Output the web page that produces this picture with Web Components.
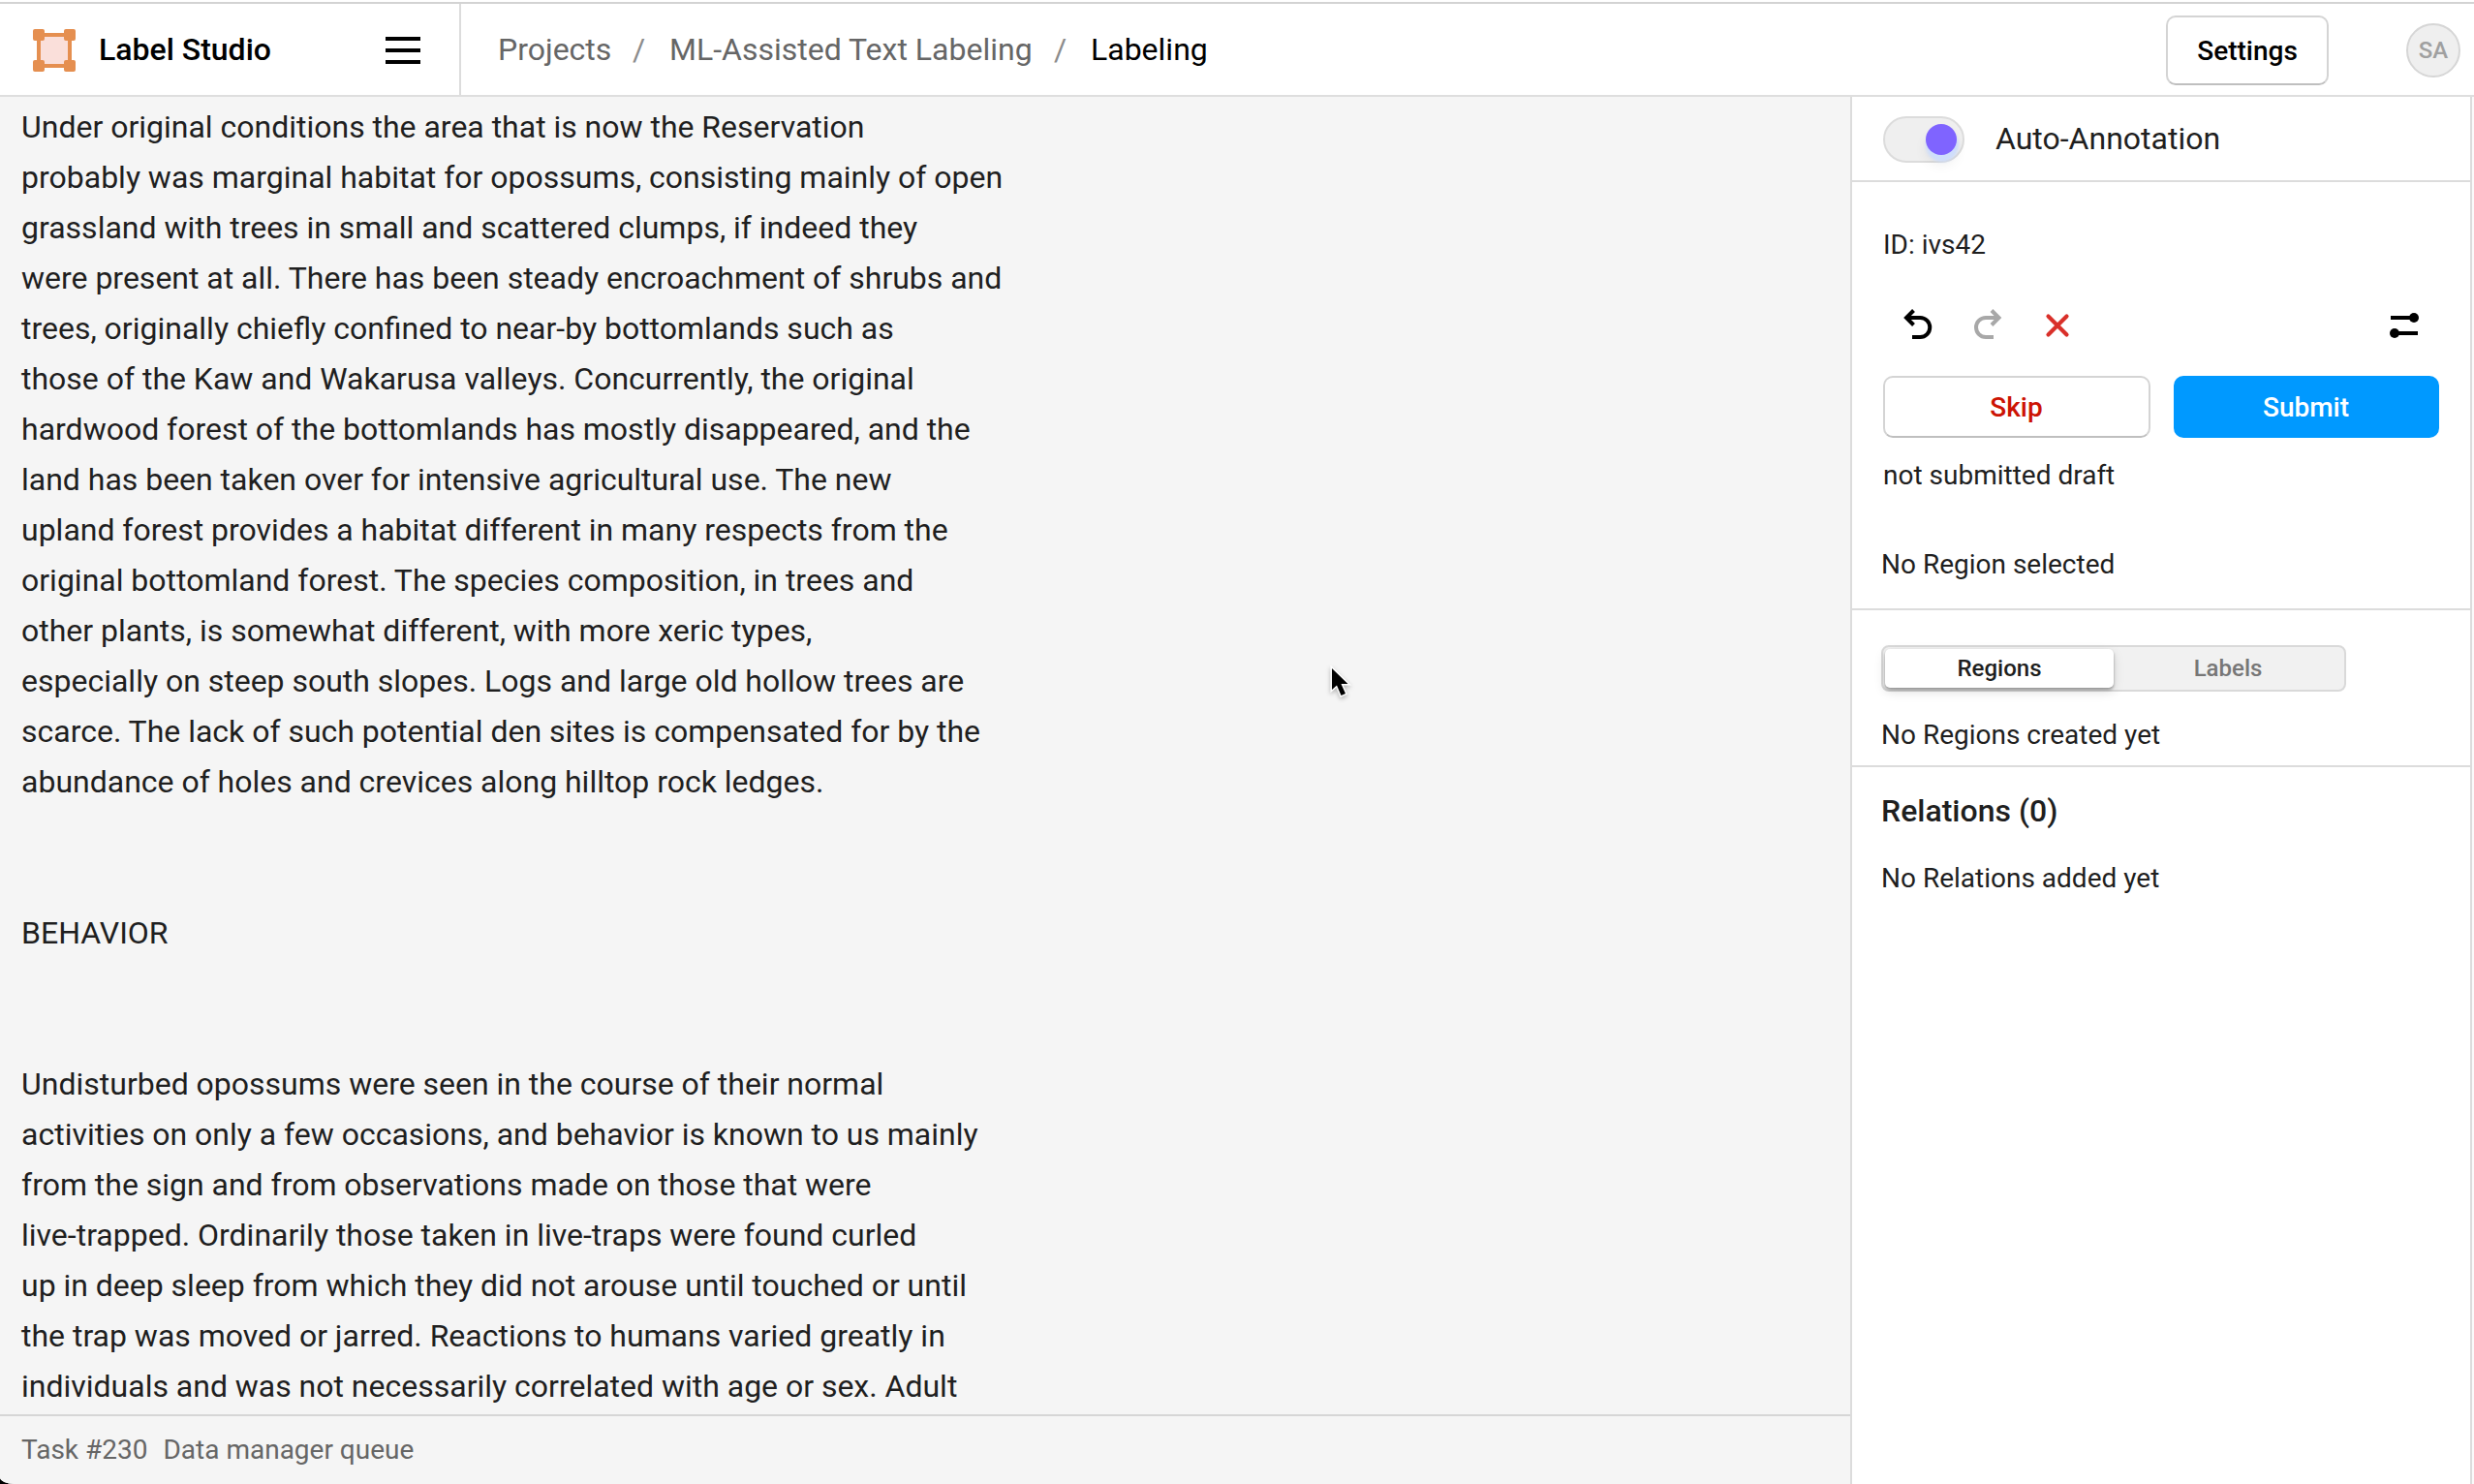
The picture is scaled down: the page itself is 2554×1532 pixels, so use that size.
<!DOCTYPE html>
<html lang="en">
<head>
<meta charset="utf-8">
<title>Label Studio</title>
<style>
html,body{margin:0;height:100%;background:#000;overflow:hidden}
body{font-family:Roboto,"Liberation Sans",sans-serif;color:#1f1f1f}
</style>
</head>
<body>
<ls-app></ls-app>
<script>
const define=(name,html)=>{
  const t=document.createElement('template');t.innerHTML=html;
  customElements.define(name,class extends HTMLElement{
    constructor(){super();this.attachShadow({mode:'open'}).append(t.content.cloneNode(true));}
  });
};

define('ls-logo',`<style>:host{display:block;width:44px;height:44px}svg{display:block}</style>
<svg width="44" height="44" viewBox="0 0 44 44"><path fill="#fadfda" d="M6 6h32v32H6z"/><path d="M6 6h32v32H6z" fill="none" stroke="#e58f50" stroke-width="4"/><g fill="#e58f50"><rect width="12" height="12" rx="2"/><rect x="32" width="12" height="12" rx="2"/><rect y="32" width="12" height="12" rx="2"/><rect x="32" y="32" width="12" height="12" rx="2"/></g></svg>`);

define('ls-burger',`<style>:host{display:flex;flex-direction:column;gap:8px;width:36px}i{height:4px;background:#000}</style><i></i><i></i><i></i>`);

define('ls-button',`<style>
:host{display:flex;box-sizing:border-box;align-items:center;justify-content:center;height:64px;border:2px solid #d4d4d4;border-bottom-color:#bfbfbf;border-radius:10px;background:#fff;font-size:28px;font-weight:500;white-space:nowrap}
:host([primary]){background:#09f;border-color:#09f;color:#fff}
:host([danger]){color:#cc1404}
</style><slot></slot>`);

define('ls-crumbs',`<style>
:host{display:flex;align-items:center;font-size:32px;color:#666;white-space:pre}
.a{margin-left:38px;width:139px}.s{color:#8c8c8c;width:38px}.b{width:397px}.c{color:#000}
</style><span class="a">Projects</span><span class="s">/</span><span class="b">ML-Assisted Text Labeling</span><span class="s">/</span><span class="c">Labeling</span>`);

define('ls-header',`<style>
:host{display:flex;box-sizing:border-box;height:100px;padding-top:2px;background:#fff;flex:none}
.bar{flex:1;display:flex;align-items:center;border-top:2px solid #d3d3d3;border-bottom:2px solid #dedede;height:94px}
.brand{box-sizing:border-box;width:476px;height:94px;display:flex;align-items:center;padding:0 40px 0 34px;border-right:2px solid #dcdcdc;color:#000}
.name{margin-left:24px;font-size:32px;font-weight:500;white-space:pre}
ls-logo{margin-top:2px}ls-burger{margin-left:auto;margin-top:2px}
ls-button{margin-left:auto;width:168px;height:72px;color:#000;margin-top:2px}
.ava{box-sizing:border-box;width:56px;height:56px;border-radius:50%;border:2px solid #d6d6d6;background:#efefef;color:#a0a0a0;font-size:24px;font-weight:500;display:flex;align-items:center;justify-content:center;margin:2px 14px 0 80px}
</style><div class="bar"><div class="brand"><ls-logo></ls-logo><span class="name">Label Studio</span><ls-burger></ls-burger></div><ls-crumbs></ls-crumbs><ls-button>Settings</ls-button><div class="ava">SA</div></div>`);

define('ls-text',`<style>:host{display:block;flex:1;min-height:0;overflow:hidden;padding:5px 0 0 22px;font-size:32px;line-height:52px;word-spacing:-.08px;white-space:pre}</style><slot></slot>`);

define('ls-footer',`<style>:host{display:flex;box-sizing:border-box;height:72px;border-top:2px solid #d6d6d6;padding:0 0 2px 22px;align-items:center;gap:16px;font-size:28px;color:#666;flex:none}</style><span>Task #230</span><span>Data manager queue</span>`);

define('ls-toggle',`<style>:host{display:flex;box-sizing:border-box;width:84px;height:48px;border-radius:24px;border:2px solid #dcdcdc;background:#efefef;justify-content:flex-end;align-items:center;padding-right:6px}i{width:32px;height:32px;border-radius:50%;background:#7f64ff;box-shadow:1px 6px 3px 1px #cfdefb,0 10px 14px #0001}</style><i></i>`);

define('ls-tools',`<style>:host{display:flex;height:48px;align-items:center}svg{display:block}.r{margin-left:auto}</style>
<svg width="204" height="48" viewBox="0 0 204 48" fill="none"><g stroke="#000" stroke-width="4"><path d="M31.500 8.500 24 16 31.500 23.500M25 16H38.250A10 10 0 0 1 38.250 36H30"/></g><g stroke="#a8a8a8" stroke-width="4"><path d="M112 8.500 119.500 16 112 23.500M118.500 16H106A10 10 0 0 0 106 36H114"/></g><path d="M170.500 14.500 189.500 33.500M189.500 14.500 170.500 33.500" stroke="#d9302a" stroke-width="4.200" stroke-linecap="round"/></svg>
<svg class="r" width="60" height="48" viewBox="0 0 60 48"><path d="M10 14h24v4H10zM13 30h25v4H13z"/><circle cx="34" cy="16" r="5"/><circle cx="14" cy="32" r="5"/></svg>`);

define('ls-tabs',`<style>:host{display:flex;box-sizing:border-box;width:480px;height:48px;border:2px solid #d9d9d9;border-radius:8px;background:#f1f1f1;padding:2px;font-size:24px;font-weight:500;color:#777}
span{flex:1;display:flex;align-items:center;justify-content:center}.on{background:#fff;color:#1f1f1f;border-radius:5px;box-shadow:0 2px 3px #0005,0 4px 12px #0002}</style><span class="on">Regions</span><span>Labels</span>`);

define('ls-side',`<style>
:host{display:block;box-sizing:border-box;width:642px;border:solid #dcdcdc;border-width:0 2px;background:#fff;font-size:28px;line-height:32px;white-space:nowrap;flex:none}
section{box-sizing:border-box;border-bottom:2px solid #dcdcdc;padding-left:32px}
.auto{height:88px;display:flex;align-items:center;font-size:32px}.auto span{margin-left:32px}ls-toggle{margin-top:2px}
.ann{height:442px;padding-top:49px}ls-tools{margin:43px 32px 28px 0}
.btns{display:flex;gap:24px;padding-right:32px}ls-button{width:276px;padding:1px 1px 0 0}ls-button[primary]{width:auto;flex:1}
.draft{margin-top:23px}.sel{margin:60px 0 0 -2px}
.reg{height:162px;padding:36px 0 0 30px}.reg div{margin-top:29px}
.rel{border:0;padding:25px 0 0 30px}h3{margin:0 0 34px;font:500 32px/40px Roboto,sans-serif}
</style>
<section class="auto"><ls-toggle></ls-toggle><span>Auto-Annotation</span></section>
<section class="ann"><div>ID: ivs42</div><ls-tools></ls-tools><div class="btns"><ls-button danger>Skip</ls-button><ls-button primary>Submit</ls-button></div><div class="draft">not submitted draft</div><div class="sel">No Region selected</div></section>
<section class="reg"><ls-tabs></ls-tabs><div>No Regions created yet</div></section>
<section class="rel"><h3>Relations (0)</h3><div>No Relations added yet</div></section>`);

define('ls-cursor',`<style>:host{position:absolute;left:1371px;top:684px}svg{display:block;filter:drop-shadow(0 2px 2px #0004)}</style>
<svg width="28" height="40" viewBox="0 0 28 40"><path d="M4 6V28L9 23.500 13.500 34 18 32 13.500 22H20.500Z" fill="#000" stroke="#fff" stroke-width="3" paint-order="stroke"/></svg>`);

define('ls-app',`<style>
:host{display:flex;flex-direction:column;width:2554px;height:1532px;overflow:hidden;position:relative;background:#fafafa;border-bottom-left-radius:15px 7px}
main{flex:1;display:flex;min-height:0}.left{flex:1;display:flex;flex-direction:column;background:#f5f5f5;min-width:0}
ls-side{margin-right:2px}
</style><ls-header></ls-header><main><div class="left"><ls-text>Under original conditions the area that is now the Reservation
probably was marginal habitat for opossums, consisting mainly of open
grassland with trees in small and scattered clumps, if indeed they
were present at all. There has been steady encroachment of shrubs and
trees, originally chiefly confined to near-by bottomlands such as
those of the Kaw and Wakarusa valleys. Concurrently, the original
hardwood forest of the bottomlands has mostly disappeared, and the
land has been taken over for intensive agricultural use. The new
upland forest provides a habitat different in many respects from the
original bottomland forest. The species composition, in trees and
other plants, is somewhat different, with more xeric types,
especially on steep south slopes. Logs and large old hollow trees are
scarce. The lack of such potential den sites is compensated for by the
abundance of holes and crevices along hilltop rock ledges.


BEHAVIOR


Undisturbed opossums were seen in the course of their normal
activities on only a few occasions, and behavior is known to us mainly
from the sign and from observations made on those that were
live-trapped. Ordinarily those taken in live-traps were found curled
up in deep sleep from which they did not arouse until touched or until
the trap was moved or jarred. Reactions to humans varied greatly in
individuals and was not necessarily correlated with age or sex. Adult</ls-text><ls-footer></ls-footer></div><ls-side></ls-side></main><ls-cursor></ls-cursor>`);
</script>
</body>
</html>
